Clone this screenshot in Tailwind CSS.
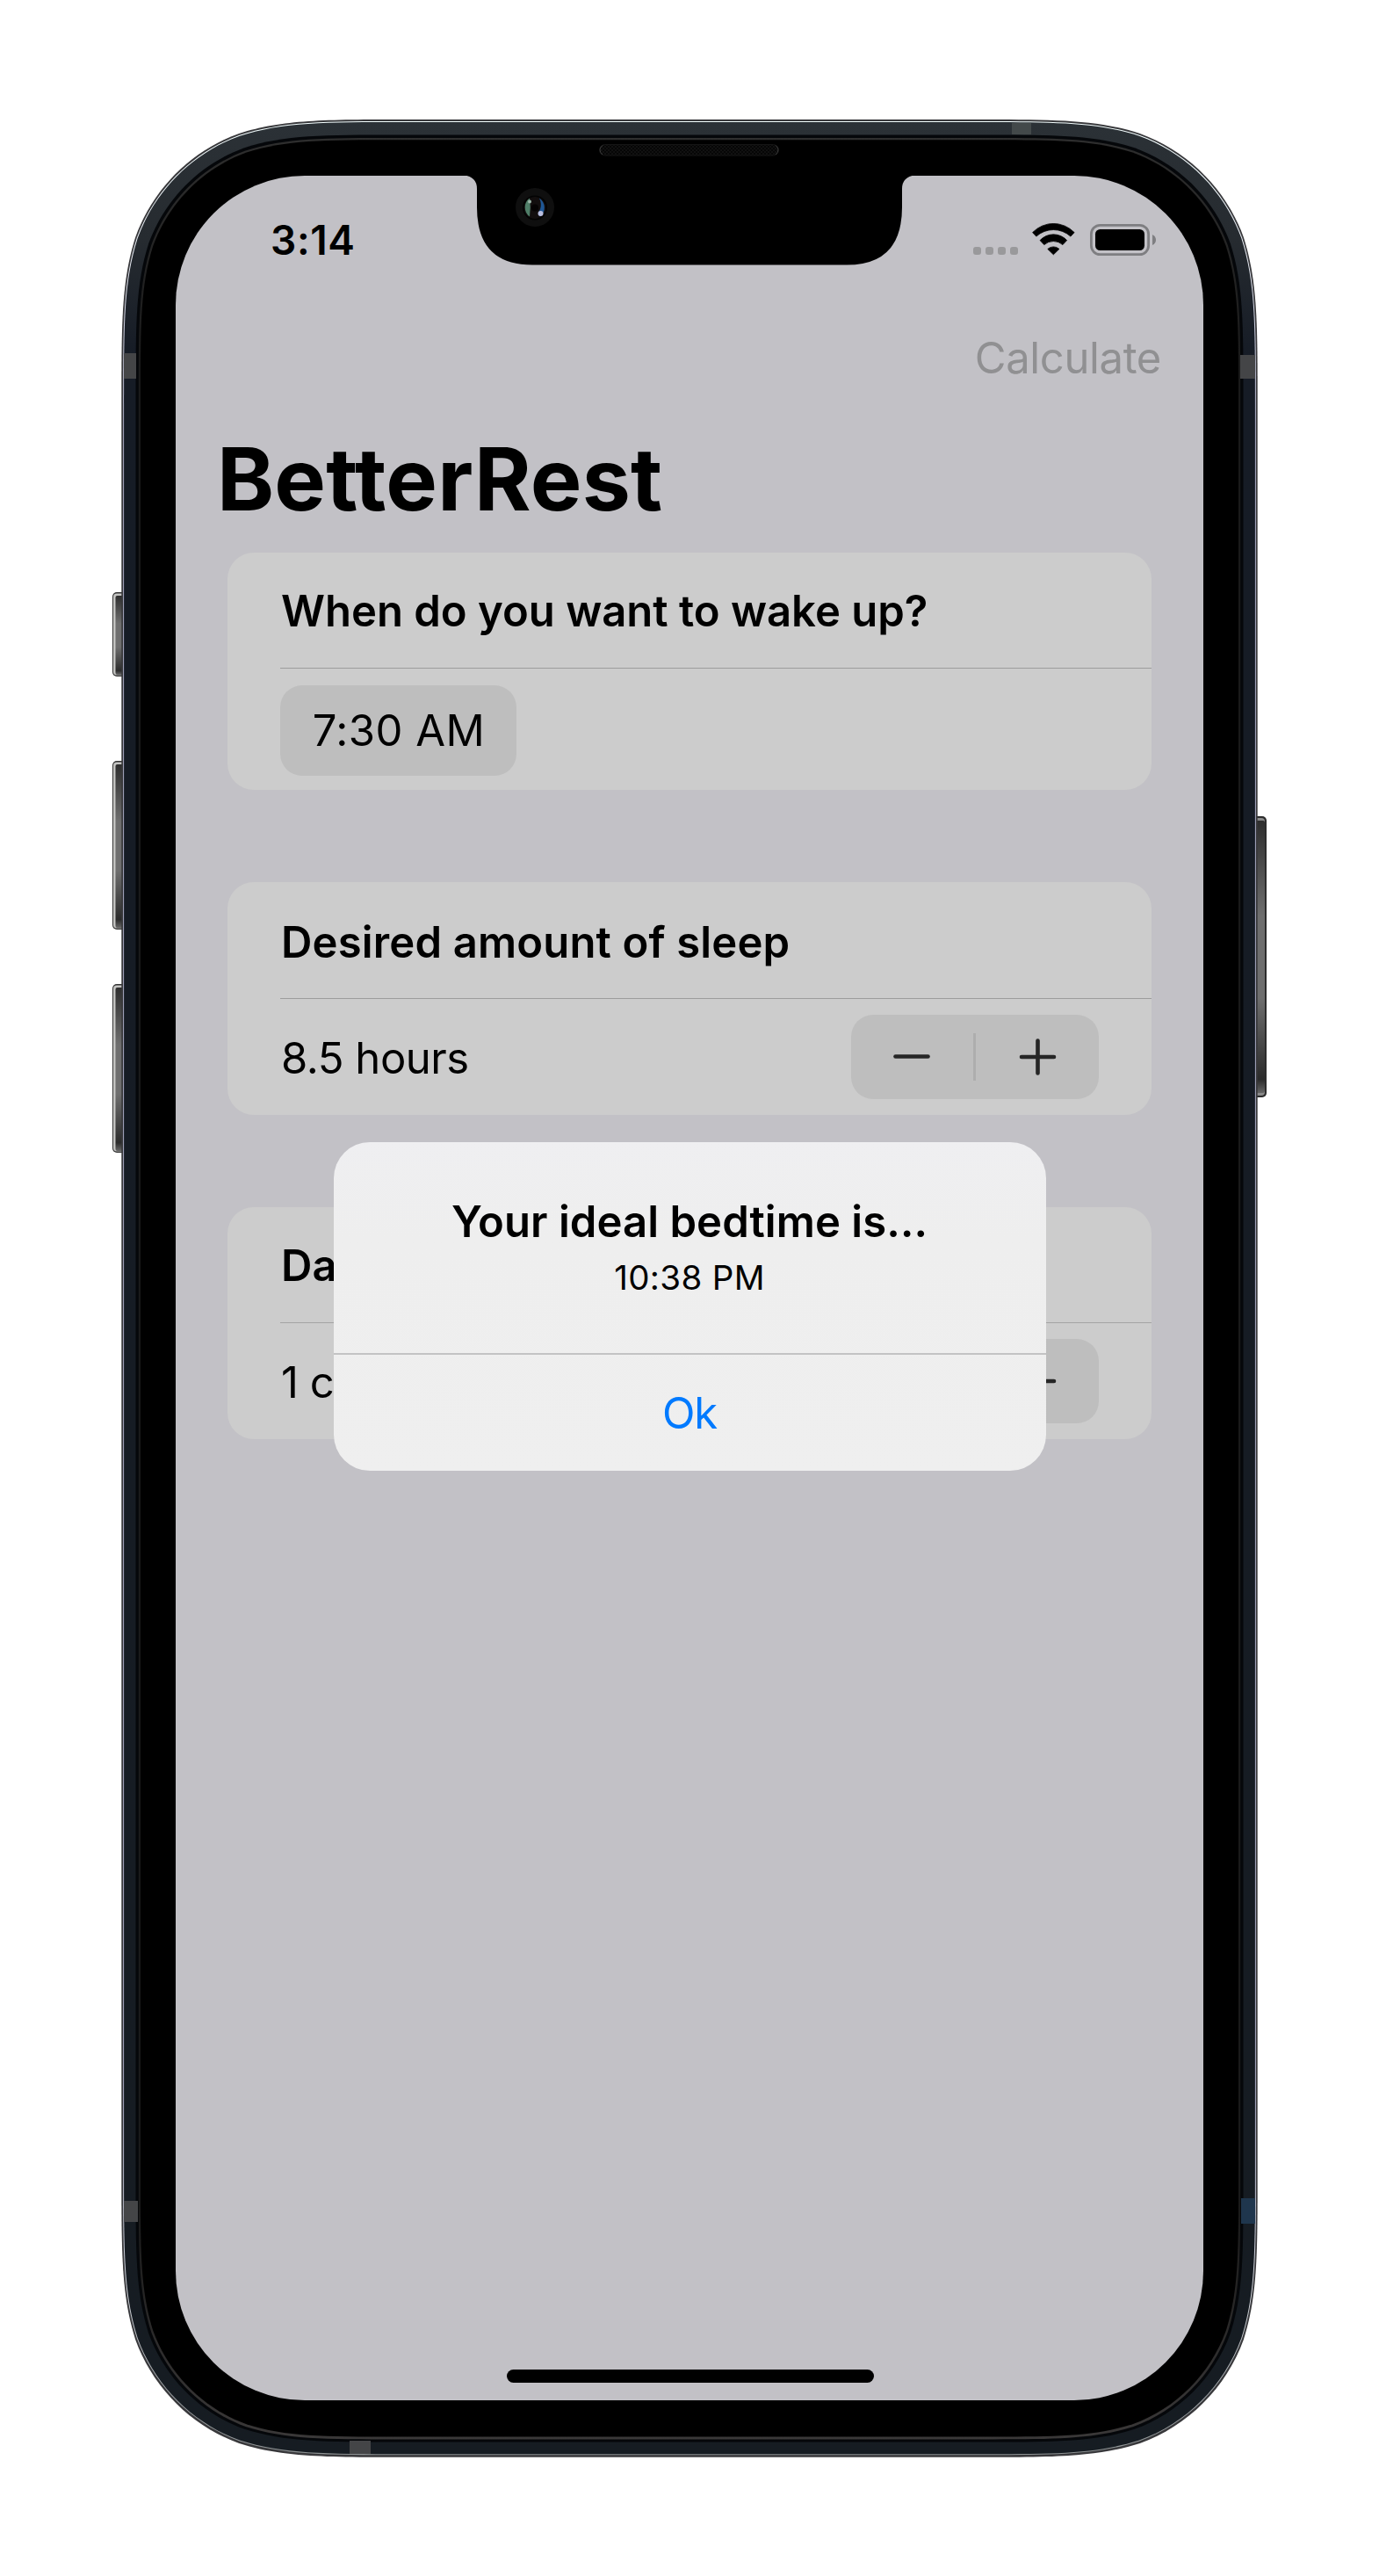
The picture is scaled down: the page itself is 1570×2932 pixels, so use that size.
<!DOCTYPE html>
<html lang="en">
<head>
<meta charset="utf-8">
<title>BetterRest</title>
<script src="https://cdn.jsdelivr.net/npm/@tailwindcss/browser@4"></script>
</head>
<body class="bg-white">
<main class="relative w-[1570px] h-[2932px] overflow-hidden pt-[200px] px-[200px] font-['Inter',sans-serif] text-[49px] text-black">

  <!-- Device body -->
  <svg class="absolute inset-0 w-[1570px] h-[2932px]" viewBox="0 0 1570 2932" aria-hidden="true">
    <defs>
      <linearGradient id="key" x1="0" y1="0" x2="0" y2="1">
        <stop offset="0" stop-color="#2e2e2e"/><stop offset=".35" stop-color="#6e6e6e"/><stop offset=".65" stop-color="#6e6e6e"/><stop offset=".95" stop-color="#2b2b2b"/><stop offset="1" stop-color="#666"/>
      </linearGradient>
      <linearGradient id="rim" gradientUnits="userSpaceOnUse" x1="0" y1="136" x2="0" y2="2797">
        <stop offset="0" stop-color="#f4ffff"/><stop offset=".06" stop-color="#e4e8f0"/><stop offset=".13" stop-color="#a9aac4"/><stop offset=".85" stop-color="#a9aac4"/><stop offset=".93" stop-color="#d0d4da"/><stop offset="1" stop-color="#8a8f90"/>
      </linearGradient>
      <linearGradient id="band" gradientUnits="userSpaceOnUse" x1="0" y1="139" x2="0" y2="2794">
        <stop offset="0" stop-color="#2b3136"/><stop offset=".05" stop-color="#262b30"/><stop offset=".1" stop-color="#161c26"/><stop offset="1" stop-color="#161c22"/>
      </linearGradient>
      <linearGradient id="bezel" gradientUnits="userSpaceOnUse" x1="0" y1="157" x2="0" y2="2776">
        <stop offset="0" stop-color="#2e2e2e"/><stop offset=".1" stop-color="#1a1a1a"/><stop offset=".9" stop-color="#1a1a1a"/><stop offset="1" stop-color="#3a3838"/>
      </linearGradient>
      <pattern id="mesh" width="4" height="4" patternUnits="userSpaceOnUse"><rect width="4" height="4" fill="#111"/><rect width="2" height="2" fill="#060606"/><rect x="2" y="2" width="2" height="2" fill="#060606"/></pattern>
    </defs>
    <!-- side keys -->
    <g>
      <rect x="128" y="674" width="16" height="96" rx="5" fill="#333"/><rect x="129" y="675.500" width="14" height="93" rx="4" fill="#c4c4c2"/><rect x="131.5" y="678" width="12" height="90" rx="2" fill="url(#key)"/>
      <rect x="128" y="866" width="16" height="192" rx="5" fill="#333"/><rect x="129" y="867.500" width="14" height="189" rx="4" fill="#c4c4c2"/><rect x="131.5" y="870" width="12" height="186" rx="2" fill="url(#key)"/>
      <rect x="128" y="1120" width="16" height="192" rx="5" fill="#333"/><rect x="129" y="1121.500" width="14" height="189" rx="4" fill="#c4c4c2"/><rect x="131.5" y="1124" width="12" height="186" rx="2" fill="url(#key)"/>
      <rect x="1426" y="929" width="16" height="320" rx="5" fill="#2c2c2c"/><rect x="1426" y="931" width="14" height="316" rx="4" fill="#8a8a8a"/><rect x="1426" y="934" width="14" height="310" rx="2" fill="url(#key)"/>
    </g>
    <g id="shell"></g>
    <!-- antenna bands -->
    <rect x="141" y="402" width="14" height="29" fill="#444547"/>
    <rect x="1412" y="404" width="17" height="27" fill="#444547"/>
    <rect x="1152" y="140" width="22" height="13" fill="#43494a"/>
    <rect x="141" y="2505" width="16" height="24" fill="#444547"/>
    <rect x="398" y="2778" width="24" height="15" fill="#444547"/>
    <rect x="1413" y="2502" width="16" height="29" fill="#1f364d"/>
  </svg>

  <!-- Screen -->
  <div class="relative w-[1170px] h-[2532px] rounded-[147px] overflow-hidden bg-[#c2c1c6]">

    <header class="flex items-end justify-between h-[141px] pl-[108px] pr-[54px] pb-[50px]">
      <span class="text-[46px] leading-[36px] font-semibold tracking-[0.64px]">3:14</span>
      <div class="flex items-end">
        <svg class="w-[51px] h-[10px] mr-[16px]" viewBox="0 0 51 10" fill="#99999b">
          <rect width="9" height="9" rx="3"/><rect x="14" width="9" height="9" rx="3"/><rect x="28" width="9" height="9" rx="3"/><rect x="42" width="9" height="9" rx="3"/>
        </svg>
        <svg class="w-[49px] h-[37px] mr-[17px]" viewBox="0 0 49 37">
          <g stroke="#000" stroke-linejoin="round" stroke-width=".8">
            <path d="M.6 10.6A33 33 0 0 1 48.1 10.6L43.9 15.1A29 29 0 0 0 4.8 15.1Z"/>
            <path d="M9.1 19.6A20.6 20.6 0 0 1 39.6 19.6L34.9 24.6A15.8 15.8 0 0 0 13.8 24.6Z"/>
            <path d="M17.8 29.4A9.8 9.8 0 0 1 30.9 29.4L24.35 35.8Z"/>
          </g>
        </svg>
        <svg class="w-[75px] h-[36px]" viewBox="0 0 75 36">
          <rect x="1.4" y="1.4" width="65.2" height="33.2" rx="10" fill="none" stroke="#7e7e81" stroke-width="2.8"/>
          <rect x="6" y="6" width="56" height="24" rx="5.5"/>
          <path d="M71 12Q75 14 75 18T71 24Z" fill="#7e7e81"/>
        </svg>
      </div>
    </header>

    <nav class="flex items-center justify-end h-[132px] pr-[48px] text-[#909092]">
      <span class="leading-none tracking-[-0.38px]">Calculate</span>
    </nav>

    <h1 class="flex items-center h-[156px] pl-[47px] pb-[10px] text-[98.5px] leading-none font-bold tracking-[0.2px]">BetterRest</h1>

    <div class="px-[59px] leading-none">
      <section class="h-[270px] rounded-[30px] bg-[#ccc] pl-[60px]">
        <h2 class="flex items-center h-[132px] pt-[2px] border-b border-[#9c9c9c] pl-px font-semibold">When do you want to wake up?</h2>
        <div class="flex items-center h-[138px] pt-[2px]">
          <span class="flex items-center justify-center w-[269px] h-[103px] pt-px pl-px rounded-[25px] bg-[#bebebe] tracking-[0.47px]">7:30 AM</span>
        </div>
      </section>

      <section class="mt-[105px] h-[265px] rounded-[30px] bg-[#ccc] pl-[60px]">
        <h2 class="flex items-center h-[133px] pt-[4px] border-b border-[#9c9c9c] pl-px font-semibold tracking-[0.16px]">Desired amount of sleep</h2>
        <div class="flex items-center justify-between h-[132px] pl-px pr-[60px]">
          <span class="pt-[2px] tracking-[-0.46px]">8.5 hours</span>
          <div class="flex items-center w-[282px] h-[96px] rounded-[25px] bg-[#bebebe]">
            <svg class="w-[139px] h-[96px]" viewBox="0 0 139 96" stroke="#262626" stroke-width="4.6" stroke-linecap="round"><path d="M50.5 47.5H87.5"/></svg>
            <span class="w-[3px] h-[54px] bg-[#aeaeae]"></span>
            <svg class="w-[140px] h-[96px]" viewBox="0 0 140 96" stroke="#262626" stroke-width="4.6" stroke-linecap="round"><path d="M52 48H89M70.5 29.5V66.5"/></svg>
          </div>
        </div>
      </section>

      <section class="mt-[105px] h-[264px] rounded-[30px] bg-[#ccc] pl-[60px]">
        <h2 class="flex items-center h-[132px] pt-[2px] border-b border-[#a4a4a4] pl-px font-semibold tracking-[0.16px]">Da</h2>
        <div class="flex items-center justify-between h-[132px] pl-px pr-[60px]">
          <span class="pt-[2px] tracking-[-0.46px]">1 c</span>
          <div class="flex items-center w-[282px] h-[96px] rounded-[25px] bg-[#bebebe]">
            <svg class="w-[139px] h-[96px]" viewBox="0 0 139 96" stroke="#262626" stroke-width="4.6" stroke-linecap="round"><path d="M50.5 47.5H87.5"/></svg>
            <span class="w-[3px] h-[54px] bg-[#aeaeae]"></span>
            <svg class="w-[140px] h-[96px]" viewBox="0 0 140 96" stroke="#262626" stroke-width="4.6" stroke-linecap="round"><path d="M52 48H89M70.5 29.5V66.5"/></svg>
          </div>
        </div>
      </section>
    </div>

    <!-- Alert -->
    <div role="alertdialog" class="absolute left-[179.5px] top-[1100px] w-[811px] h-[374px] rounded-[41px] bg-linear-to-b from-[#efeff1] via-[#eeeeee] via-30% to-[#efefef] flex flex-col items-center leading-none">
      <div class="flex flex-col items-center w-full h-[242px] pt-[66px] border-b-2 border-[#c3c3c4]">
        <strong class="font-semibold tracking-[0.06px]">Your ideal bedtime is…</strong>
        <span class="mt-[20px] text-[38.5px] tracking-[0.34px]">10:38 PM</span>
      </div>
      <button class="flex items-center justify-center w-full h-[132px] pt-px text-[#007aff] tracking-[-1.1px]">Ok</button>
    </div>

    <div class="absolute left-[376.5px] top-[2497px] w-[418px] h-[15px] rounded-full bg-black"></div>
  </div>

  <!-- Notch, speaker and camera -->
  <svg class="absolute left-[520px] top-[150px] w-[530px] h-[160px]" viewBox="520 150 530 160" aria-hidden="true">
    <path d="M528 199.5Q543 201 543 215V236Q543 301.5 606 301.5H964Q1027 301.5 1027 236V215Q1027 201 1042 199.5Z"/>
    <rect x="682.5" y="164.500" width="204" height="12.500" rx="6.2" fill="url(#mesh)" stroke="#151515"/>
    <path d="M686 165.500Q680 170.500 686 176M883 165.500Q889 170.500 883 176" fill="none" stroke="#3c3c3c"/>
    <circle cx="609" cy="236" r="22" fill="#0f0f0f"/>
    <circle cx="609" cy="236.500" r="14" fill="#030303"/>
    <circle cx="609" cy="236.500" r="12.500" fill="#120e0e"/>
    <path d="M603 225.500A13 13 0 0 0 603 246.500Q604.500 236 603 225.500Z" fill="#4f7e68"/>
    <path d="M614 225.500A13 13 0 0 1 615 246.500Q611.500 244 615 238Q617 232 614 225.500Z" fill="#1f5795"/>
    <circle cx="609" cy="236.500" r="4" fill="#050303"/>
    <circle cx="603" cy="229.500" r="2" fill="#9cb5a8"/>
    <circle cx="615.500" cy="243" r="3" fill="#b9bfe0"/>
  </svg>
</main>

<script>
// Concentric continuous-corner outlines that make up the metal band and bezel.
function outline(l, t, r, b, k) {
  const corner = [[1.52866, 0], [1.08849, 0], [0.86841, 0], [0.63149, 0.07491], [0.37282, 0.16906], [0.16906, 0.37282], [0.07491, 0.63149], [0, 0.86841], [0, 1.08849], [0, 1.52866]];
  const tr = corner.map(([x, y]) => [r - x * k, t + y * k]);
  const br = corner.map(([x, y]) => [r - x * k, b - y * k]).reverse();
  const bl = corner.map(([x, y]) => [l + x * k, b - y * k]);
  const tl = corner.map(([x, y]) => [l + x * k, t + y * k]).reverse();
  return [tr, br, bl, tl].map((p, i) => (i ? 'L' : 'M') + p[0] + 'C' + p.slice(1).join(' ')).join('') + 'Z';
}
const layers = [
  [138.3, 136, 1431.7, 2796.8, 212, '#38383b'],
  [140.1, 138, 1429.9, 2794.2, 210, 'url(#rim)'],
  [141.1, 139, 1428.9, 2793.2, 209, 'url(#band)'],
  [154.5, 153.5, 1415.5, 2779.5, 196, '#05070a'],
  [157.8, 157, 1412.2, 2776.5, 193, 'url(#bezel)'],
  [160, 159.2, 1410, 2773.5, 191, '#000']
];
document.getElementById('shell').innerHTML = layers.map(([l, t, r, b, k, c]) => `<path d="${outline(l, t, r, b, k)}" fill="${c}"/>`).join('');
</script>
</body>
</html>
